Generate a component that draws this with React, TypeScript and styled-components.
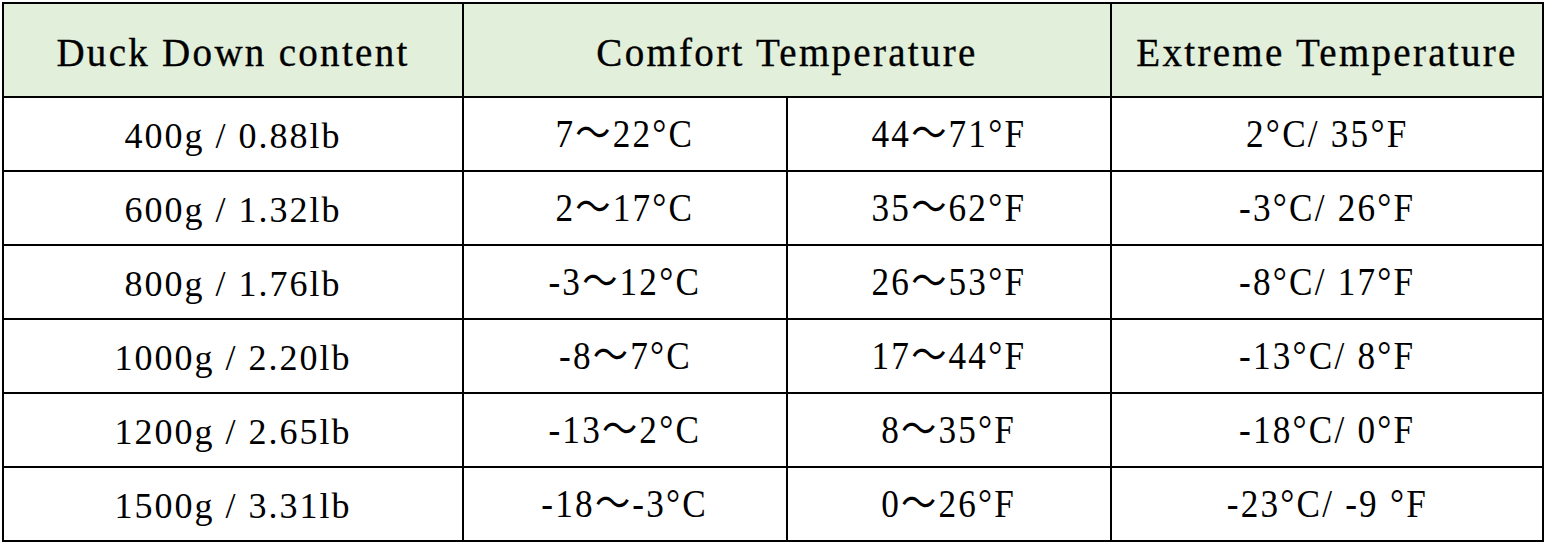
import styled, { createGlobalStyle } from "styled-components";

interface RowData {
  weight: string;
  celsius: string;
  fahrenheit: string;
  extreme: string;
}

const rows: RowData[] = [
  { weight: "400g / 0.88lb", celsius: "7～22°C", fahrenheit: "44～71°F", extreme: "2°C/ 35°F" },
  { weight: "600g / 1.32lb", celsius: "2～17°C", fahrenheit: "35～62°F", extreme: "-3°C/ 26°F" },
  { weight: "800g / 1.76lb", celsius: "-3～12°C", fahrenheit: "26～53°F", extreme: "-8°C/ 17°F" },
  { weight: "1000g / 2.20lb", celsius: "-8～7°C", fahrenheit: "17～44°F", extreme: "-13°C/ 8°F" },
  { weight: "1200g / 2.65lb", celsius: "-13～2°C", fahrenheit: "8～35°F", extreme: "-18°C/ 0°F" },
  { weight: "1500g / 3.31lb", celsius: "-18～-3°C", fahrenheit: "0～26°F", extreme: "-23°C/ -9 °F" },
];

const App = () => {
  return (
    <>
      <GlobalStyle />
      <Table>
        <colgroup>
          <col style={{ width: 460 }} />
          <col style={{ width: 324 }} />
          <col style={{ width: 324 }} />
          <col style={{ width: 432 }} />
        </colgroup>
        <thead>
          <HeadRow>
            <HeadCell>Duck Down content</HeadCell>
            <HeadCell colSpan={2}>Comfort Temperature</HeadCell>
            <HeadCell>Extreme Temperature</HeadCell>
          </HeadRow>
        </thead>
        <tbody>
          {rows.map((row, index) => (
            <BodyRow key={index}>
              <WeightCell>{row.weight}</WeightCell>
              <TempCell>
                <TempText>{row.celsius}</TempText>
              </TempCell>
              <TempCell>
                <TempText>{row.fahrenheit}</TempText>
              </TempCell>
              <TempCell>
                <TempText>{row.extreme}</TempText>
              </TempCell>
            </BodyRow>
          ))}
        </tbody>
      </Table>
    </>
  );
};

const GlobalStyle = createGlobalStyle`
  html, body {
    margin: 0;
    padding: 0;
    background: #ffffff;
  }

  body {
    padding: 2px 0 0 2px;
    font-family: "Liberation Serif", "Noto Sans CJK SC", serif;
    color: #000000;
  }
`;

const Table = styled.table`
  border-collapse: collapse;
  table-layout: fixed;
  width: 1541px;

  th,
  td {
    border: 2px solid #000000;
    padding: 0;
    text-align: center;
    vertical-align: middle;
    white-space: nowrap;
  }
`;

const HeadRow = styled.tr`
  height: 94px;
  background-color: #e2efda;
`;

const HeadCell = styled.th`
  font-family: "Liberation Serif", serif;
  font-size: 39px;
  font-weight: 400;
  letter-spacing: 2.3px;
  line-height: 1;
  -webkit-text-stroke: 0.35px #000000;
  padding-top: 4px !important;
`;

const BodyRow = styled.tr`
  height: 74px;
`;

const WeightCell = styled.td`
  font-size: 36px;
  letter-spacing: 2px;
  line-height: 1;
  padding-top: 4px !important;
`;

const TempCell = styled.td`
  font-size: 40px;
  line-height: 1;
`;

const TempText = styled.span`
  display: inline-block;
  line-height: 1;
  letter-spacing: 2.5px;
  transform: scaleX(0.88);
  font-family: "Liberation Serif", "Noto Sans CJK SC", serif;
`;

export default App;
